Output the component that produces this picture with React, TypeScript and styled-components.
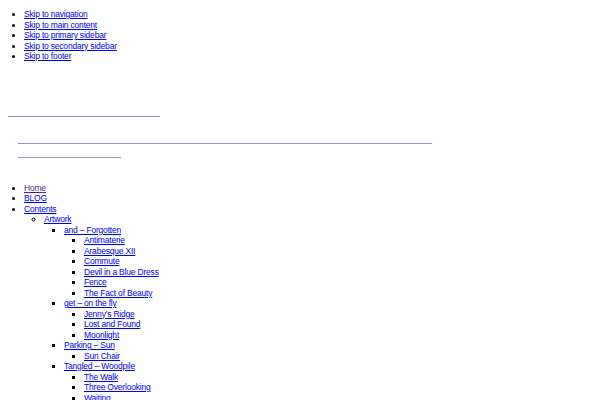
import React from 'react';
import styled, { createGlobalStyle } from 'styled-components';

const GlobalStyle = createGlobalStyle`
  html, body {
    margin: 0;
    padding: 0;
    background: #ffffff;
  }

  body {
    padding: 9px 8px 8px;
    font-family: "Liberation Sans", Arial, sans-serif;
    font-size: 8.5px;
    letter-spacing: -0.2px;
    line-height: 10.5px;
    color: #000000;
  }
`;

const List = styled.ul<{ $indent?: number }>`
  margin: 0;
  padding-left: ${({ $indent }) => $indent ?? 20}px;
  list-style-position: outside;
`;

const Item = styled.li`
  line-height: 10.5px;
`;

const Link = styled.a<{ $visited?: boolean }>`
  color: ${({ $visited }) => ($visited ? '#551a8b' : '#0000ee')};
  text-decoration: underline;
`;

const Header = styled.header`
  display: flex;
  flex-direction: column;
  align-items: flex-start;
  padding-top: 54px;
`;

// empty header links: only their underline shows
const Rule = styled.a<{ $width: number; $left?: number; $gap?: number }>`
  display: block;
  width: ${({ $width }) => $width}px;
  height: 1px;
  margin-left: ${({ $left }) => $left ?? 0}px;
  margin-top: ${({ $gap }) => $gap ?? 0}px;
  background: #9d8ac6;
`;

const Nav = styled.nav`
  padding-top: 25px;
`;

type Node = { label: string; visited?: boolean; children?: Node[] };

const skipLinks = [
  'Skip to navigation',
  'Skip to main content',
  'Skip to primary sidebar',
  'Skip to secondary sidebar',
  'Skip to footer',
];

const menu: Node[] = [
  { label: 'Home', visited: true },
  { label: 'BLOG' },
  {
    label: 'Contents',
    children: [
      {
        label: 'Artwork',
        children: [
          {
            label: 'and – Forgotten',
            children: [
              { label: 'Antimaterie' },
              { label: 'Arabesque XII' },
              { label: 'Commute' },
              { label: 'Devil in a Blue Dress' },
              { label: 'Fence' },
              { label: 'The Fact of Beauty' },
            ],
          },
          {
            label: 'get – on the fly',
            children: [
              { label: 'Jenny’s Ridge' },
              { label: 'Lost and Found' },
              { label: 'Moonlight' },
            ],
          },
          {
            label: 'Parking – Sun',
            children: [{ label: 'Sun Chair' }],
          },
          {
            label: 'Tangled – Woodpile',
            children: [
              { label: 'The Walk' },
              { label: 'Three Overlooking' },
              { label: 'Waiting' },
            ],
          },
        ],
      },
    ],
  },
];

const MenuList: React.FC<{ nodes: Node[]; indent?: number }> = ({ nodes, indent }) => (
  <List $indent={indent}>
    {nodes.map((node) => (
      <Item key={node.label}>
        <Link href="#" $visited={node.visited}>
          {node.label}
        </Link>
        {node.children && <MenuList nodes={node.children} />}
      </Item>
    ))}
  </List>
);

export default function App() {
  return (
    <>
      <GlobalStyle />
      <List $indent={16}>
        {skipLinks.map((label) => (
          <Item key={label}>
            <Link href="#">{label}</Link>
          </Item>
        ))}
      </List>
      <Header>
        <Rule href="#" $width={152} />
        <Rule href="#" $width={414} $left={10} $gap={26} />
        <Rule href="#" $width={103} $left={10} $gap={13} />
      </Header>
      <Nav>
        <MenuList nodes={menu} indent={16} />
      </Nav>
    </>
  );
}
